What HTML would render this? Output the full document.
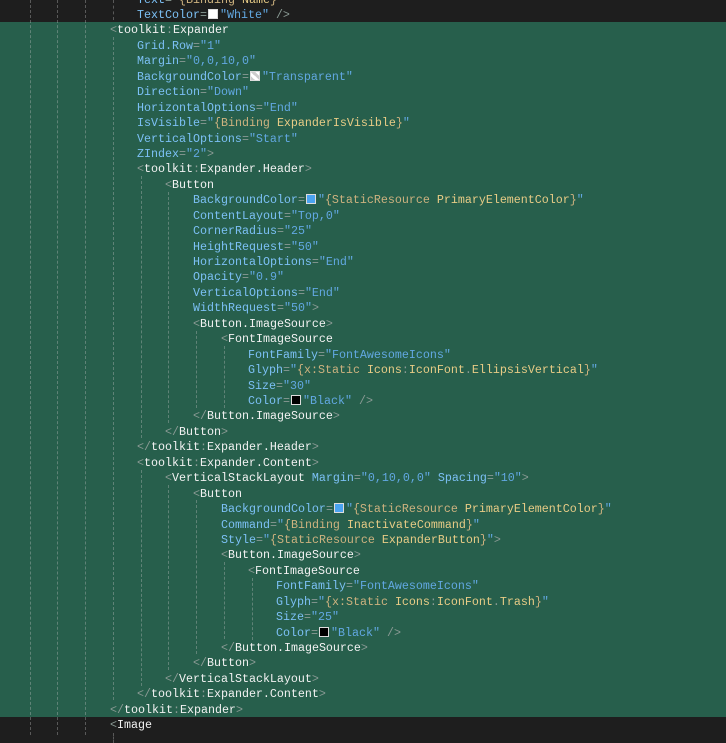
<!DOCTYPE html>
<html><head><meta charset="utf-8"><style>
html,body{margin:0;padding:0}
body{width:726px;height:735px;background:#1e1e1e;position:relative;overflow:hidden;font-family:"Liberation Mono",monospace;font-size:11.67px}
.g{position:absolute;left:0;width:726px;top:22px;height:695px;background:#275f4c}
.v{position:absolute;width:0;border-left:1px dashed rgba(200,200,200,0.35)}
.l{position:absolute;height:15.44px;line-height:15.44px;white-space:pre;color:#e2e2e2;margin-top:1.5px}
.p{color:#8a9a94}.t{color:#f2f2f2}.a{color:#7cc0f5}.s{color:#62a8e2}.k{color:#cdb27f}.y{color:#e8cc86}
.sw{display:inline-block;width:8px;height:8px;border:1px solid #ddd;vertical-align:-1px;margin:0 2px 0 1px}
</style></head><body>
<div class="g"></div>
<div class="v" style="left:30px;top:0;height:735px"></div>
<div class="v" style="left:57px;top:0;height:735px"></div>
<div class="v" style="left:85px;top:0;height:735px"></div>
<div class="v" style="left:113px;top:0;height:20px"></div>
<div class="v" style="left:113px;top:37px;height:663px"></div>
<div class="v" style="left:113px;top:733px;height:10px"></div>
<div class="v" style="left:141px;top:176px;height:262px"></div>
<div class="v" style="left:168px;top:192px;height:231px"></div>
<div class="v" style="left:196px;top:331px;height:77px"></div>
<div class="v" style="left:224px;top:346px;height:62px"></div>
<div class="v" style="left:141px;top:470px;height:216px"></div>
<div class="v" style="left:168px;top:485px;height:185px"></div>
<div class="v" style="left:196px;top:500px;height:154px"></div>
<div class="v" style="left:224px;top:562px;height:77px"></div>
<div class="v" style="left:252px;top:578px;height:62px"></div>

<div class="l" style="top:-9px;left:137px"><span class="a">Text</span><span class="p">=</span><span class="s">"</span><span class="k">{Binding </span><span class="y">Name</span><span class="k">}</span><span class="s">"</span></div>
<div class="l" style="top:6.4px;left:137px"><span class="a">TextColor</span><span class="p">=</span><span class="sw" style="background:#fff"></span><span class="s">"White"</span> <span class="p">/&gt;</span></div>
<div class="l" style="top:21.9px;left:110px"><span class="p">&lt;</span><span class="t">toolkit</span><span class="p">:</span><span class="t">Expander</span></div>
<div class="l" style="top:37.3px;left:137px"><span class="a">Grid.Row</span><span class="p">=</span><span class="s">"1"</span></div>
<div class="l" style="top:52.8px;left:137px"><span class="a">Margin</span><span class="p">=</span><span class="s">"0,0,10,0"</span></div>
<div class="l" style="top:68.2px;left:137px"><span class="a">BackgroundColor</span><span class="p">=</span><span class="sw" style="background:linear-gradient(45deg,#ccc 25%,#fff 25%,#fff 50%,#ccc 50%,#ccc 75%,#fff 75%)"></span><span class="s">"Transparent"</span></div>
<div class="l" style="top:83.6px;left:137px"><span class="a">Direction</span><span class="p">=</span><span class="s">"Down"</span></div>
<div class="l" style="top:99.1px;left:137px"><span class="a">HorizontalOptions</span><span class="p">=</span><span class="s">"End"</span></div>
<div class="l" style="top:114.5px;left:137px"><span class="a">IsVisible</span><span class="p">=</span><span class="s">"</span><span class="k">{Binding </span><span class="y">ExpanderIsVisible</span><span class="k">}</span><span class="s">"</span></div>
<div class="l" style="top:130px;left:137px"><span class="a">VerticalOptions</span><span class="p">=</span><span class="s">"Start"</span></div>
<div class="l" style="top:145.4px;left:137px"><span class="a">ZIndex</span><span class="p">=</span><span class="s">"2"</span><span class="p">&gt;</span></div>
<div class="l" style="top:160.8px;left:137px"><span class="p">&lt;</span><span class="t">toolkit</span><span class="p">:</span><span class="t">Expander.Header</span><span class="p">&gt;</span></div>
<div class="l" style="top:176.3px;left:165px"><span class="p">&lt;</span><span class="t">Button</span></div>
<div class="l" style="top:191.7px;left:193px"><span class="a">BackgroundColor</span><span class="p">=</span><span class="sw" style="background:#4aa3f0"></span><span class="s">"</span><span class="k">{StaticResource </span><span class="y">PrimaryElementColor</span><span class="k">}</span><span class="s">"</span></div>
<div class="l" style="top:207.2px;left:193px"><span class="a">ContentLayout</span><span class="p">=</span><span class="s">"Top,0"</span></div>
<div class="l" style="top:222.6px;left:193px"><span class="a">CornerRadius</span><span class="p">=</span><span class="s">"25"</span></div>
<div class="l" style="top:238px;left:193px"><span class="a">HeightRequest</span><span class="p">=</span><span class="s">"50"</span></div>
<div class="l" style="top:253.5px;left:193px"><span class="a">HorizontalOptions</span><span class="p">=</span><span class="s">"End"</span></div>
<div class="l" style="top:268.9px;left:193px"><span class="a">Opacity</span><span class="p">=</span><span class="s">"0.9"</span></div>
<div class="l" style="top:284.4px;left:193px"><span class="a">VerticalOptions</span><span class="p">=</span><span class="s">"End"</span></div>
<div class="l" style="top:299.8px;left:193px"><span class="a">WidthRequest</span><span class="p">=</span><span class="s">"50"</span><span class="p">&gt;</span></div>
<div class="l" style="top:315.2px;left:193px"><span class="p">&lt;</span><span class="t">Button.ImageSource</span><span class="p">&gt;</span></div>
<div class="l" style="top:330.7px;left:221px"><span class="p">&lt;</span><span class="t">FontImageSource</span></div>
<div class="l" style="top:346.1px;left:248px"><span class="a">FontFamily</span><span class="p">=</span><span class="s">"FontAwesomeIcons"</span></div>
<div class="l" style="top:361.6px;left:248px"><span class="a">Glyph</span><span class="p">=</span><span class="s">"</span><span class="k">{x:Static </span><span class="y">Icons</span><span class="p">:</span><span class="y">IconFont</span><span class="p">.</span><span class="y">EllipsisVertical</span><span class="k">}</span><span class="s">"</span></div>
<div class="l" style="top:377px;left:248px"><span class="a">Size</span><span class="p">=</span><span class="s">"30"</span></div>
<div class="l" style="top:392.4px;left:248px"><span class="a">Color</span><span class="p">=</span><span class="sw" style="background:#000"></span><span class="s">"Black"</span> <span class="p">/&gt;</span></div>
<div class="l" style="top:407.9px;left:193px"><span class="p">&lt;/</span><span class="t">Button.ImageSource</span><span class="p">&gt;</span></div>
<div class="l" style="top:423.3px;left:165px"><span class="p">&lt;/</span><span class="t">Button</span><span class="p">&gt;</span></div>
<div class="l" style="top:438.8px;left:137px"><span class="p">&lt;/</span><span class="t">toolkit</span><span class="p">:</span><span class="t">Expander.Header</span><span class="p">&gt;</span></div>
<div class="l" style="top:454.2px;left:137px"><span class="p">&lt;</span><span class="t">toolkit</span><span class="p">:</span><span class="t">Expander.Content</span><span class="p">&gt;</span></div>
<div class="l" style="top:469.6px;left:165px"><span class="p">&lt;</span><span class="t">VerticalStackLayout</span> <span class="a">Margin</span><span class="p">=</span><span class="s">"0,10,0,0"</span> <span class="a">Spacing</span><span class="p">=</span><span class="s">"10"</span><span class="p">&gt;</span></div>
<div class="l" style="top:485.1px;left:193px"><span class="p">&lt;</span><span class="t">Button</span></div>
<div class="l" style="top:500.5px;left:221px"><span class="a">BackgroundColor</span><span class="p">=</span><span class="sw" style="background:#4aa3f0"></span><span class="s">"</span><span class="k">{StaticResource </span><span class="y">PrimaryElementColor</span><span class="k">}</span><span class="s">"</span></div>
<div class="l" style="top:516px;left:221px"><span class="a">Command</span><span class="p">=</span><span class="s">"</span><span class="k">{Binding </span><span class="y">InactivateCommand</span><span class="k">}</span><span class="s">"</span></div>
<div class="l" style="top:531.4px;left:221px"><span class="a">Style</span><span class="p">=</span><span class="s">"</span><span class="k">{StaticResource </span><span class="y">ExpanderButton</span><span class="k">}</span><span class="s">"</span><span class="p">&gt;</span></div>
<div class="l" style="top:546.8px;left:221px"><span class="p">&lt;</span><span class="t">Button.ImageSource</span><span class="p">&gt;</span></div>
<div class="l" style="top:562.3px;left:248px"><span class="p">&lt;</span><span class="t">FontImageSource</span></div>
<div class="l" style="top:577.7px;left:276px"><span class="a">FontFamily</span><span class="p">=</span><span class="s">"FontAwesomeIcons"</span></div>
<div class="l" style="top:593.2px;left:276px"><span class="a">Glyph</span><span class="p">=</span><span class="s">"</span><span class="k">{x:Static </span><span class="y">Icons</span><span class="p">:</span><span class="y">IconFont</span><span class="p">.</span><span class="y">Trash</span><span class="k">}</span><span class="s">"</span></div>
<div class="l" style="top:608.6px;left:276px"><span class="a">Size</span><span class="p">=</span><span class="s">"25"</span></div>
<div class="l" style="top:624px;left:276px"><span class="a">Color</span><span class="p">=</span><span class="sw" style="background:#000"></span><span class="s">"Black"</span> <span class="p">/&gt;</span></div>
<div class="l" style="top:639.5px;left:221px"><span class="p">&lt;/</span><span class="t">Button.ImageSource</span><span class="p">&gt;</span></div>
<div class="l" style="top:654.9px;left:193px"><span class="p">&lt;/</span><span class="t">Button</span><span class="p">&gt;</span></div>
<div class="l" style="top:670.4px;left:165px"><span class="p">&lt;/</span><span class="t">VerticalStackLayout</span><span class="p">&gt;</span></div>
<div class="l" style="top:685.8px;left:137px"><span class="p">&lt;/</span><span class="t">toolkit</span><span class="p">:</span><span class="t">Expander.Content</span><span class="p">&gt;</span></div>
<div class="l" style="top:701.2px;left:110px"><span class="p">&lt;/</span><span class="t">toolkit</span><span class="p">:</span><span class="t">Expander</span><span class="p">&gt;</span></div>
<div class="l" style="top:716.7px;left:110px"><span class="p">&lt;</span><span class="t">Image</span></div>
</body></html>
